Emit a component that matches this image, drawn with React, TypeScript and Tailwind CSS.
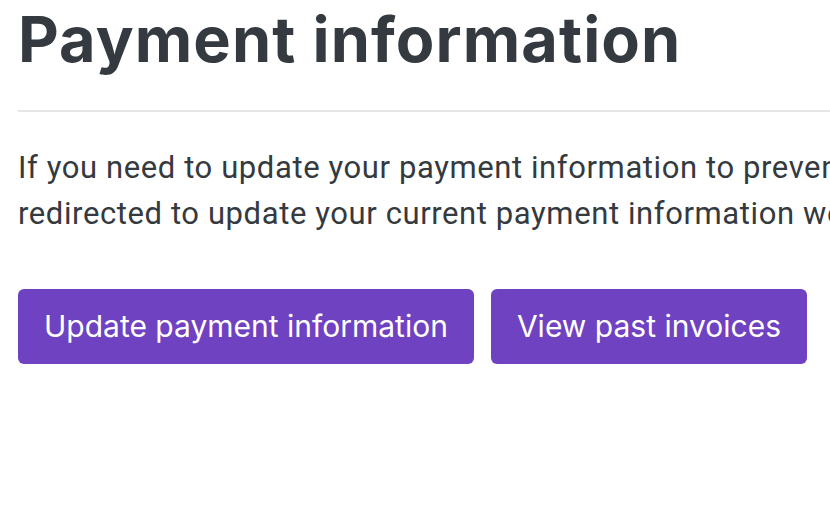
export default function App() {
  return (
    <div className="w-[830px] h-[512px] overflow-hidden bg-white">
      <div className="w-[1200px] pl-[18px] text-[#343a40]">
        <h1
          className="text-[63px] font-bold leading-none pt-[8px] tracking-[1.1px]"
          style={{ fontFamily: "Inter, sans-serif" }}
        >
          Payment information
        </h1>
        <hr className="border-0 border-t-2 border-[#e6e6e6] mt-[39px]" />
        <p
          className="text-[31px] leading-[46px] mt-[33px] tracking-[0.6px] whitespace-nowrap"
          style={{ fontFamily: "Roboto, sans-serif" }}
        >
          If you need to update your payment information to prevent any service interruption, you will be
          <br />
          redirected to update your current payment information we have on file.
        </p>
        <div className="flex gap-[17px] mt-[52px]" style={{ fontFamily: "Inter, sans-serif" }}>
          <button className="h-[75px] px-[26px] rounded-[6px] bg-[#6f42c1] text-white text-[30px]">
            Update payment information
          </button>
          <button className="h-[75px] px-[26px] rounded-[6px] bg-[#6f42c1] text-white text-[30px]">
            View past invoices
          </button>
        </div>
      </div>
    </div>
  );
}
